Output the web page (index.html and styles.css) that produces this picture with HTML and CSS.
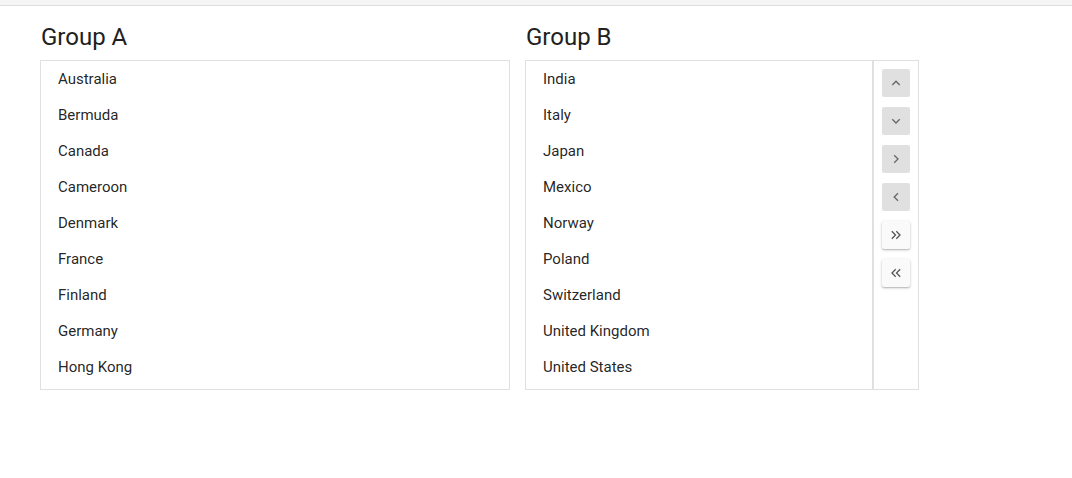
FILE: index.html
```html
<!DOCTYPE html>
<html>
<head>
<meta charset="UTF-8">
<title>Dual List Box</title>
<link rel="stylesheet" href="styles.css">
</head>
<body>

<div class="topbar"></div>

<div class="container">
  <div class="group group-a">
    <h4 class="group-title">Group A</h4>
    <ul class="listbox">
      <li>Australia</li>
      <li>Bermuda</li>
      <li>Canada</li>
      <li>Cameroon</li>
      <li>Denmark</li>
      <li>France</li>
      <li>Finland</li>
      <li>Germany</li>
      <li>Hong Kong</li>
    </ul>
  </div>

  <div class="group group-b">
    <h4 class="group-title">Group B</h4>
    <div class="listbox-wrap">
      <ul class="listbox">
        <li>India</li>
        <li>Italy</li>
        <li>Japan</li>
        <li>Mexico</li>
        <li>Norway</li>
        <li>Poland</li>
        <li>Switzerland</li>
        <li>United Kingdom</li>
        <li>United States</li>
      </ul>
      <div class="toolbar">
        <button class="tool disabled" title="Move Up">
          <svg width="10" height="10" viewBox="0 0 10 10"><path d="M1.3 7 L5 3.2 L8.7 7"/></svg>
        </button>
        <button class="tool disabled" title="Move Down">
          <svg width="10" height="10" viewBox="0 0 10 10"><path d="M1.3 3.2 L5 7 L8.7 3.2"/></svg>
        </button>
        <button class="tool disabled" title="Move To">
          <svg width="10" height="10" viewBox="0 0 10 10"><path d="M3.2 1.3 L7 5 L3.2 8.7"/></svg>
        </button>
        <button class="tool disabled" title="Move From">
          <svg width="10" height="10" viewBox="0 0 10 10"><path d="M7 1.3 L3.2 5 L7 8.7"/></svg>
        </button>
        <button class="tool" title="Move All To">
          <svg width="12" height="10" viewBox="0 0 12 10"><path d="M1.8 1.3 L5.5 5 L1.8 8.7 M6.3 1.3 L10 5 L6.3 8.7"/></svg>
        </button>
        <button class="tool" title="Move All From">
          <svg width="12" height="10" viewBox="0 0 12 10"><path d="M5.7 1.3 L2 5 L5.7 8.7 M10.2 1.3 L6.5 5 L10.2 8.7"/></svg>
        </button>
      </div>
    </div>
  </div>
</div>

</body>
</html>
```

FILE: styles.css
```css
/* Page */
body {
  margin: 0;
  background-color: #ffffff;
  color: rgba(0, 0, 0, 0.87);
  font-family: Roboto, "Liberation Sans", sans-serif;
}

.topbar {
  height: 5px;
  background-color: #f5f5f5;
  border-bottom: 1px solid #dddddd;
}

/* Layout of the two groups */
.container {
  display: flex;
  flex-direction: row;
  align-items: flex-start;
  gap: 15px;
  padding: 17px 40px 0 40px;
}

.group-a {
  width: 470px;
}

.group-b {
  width: 394px;
}

.group-title {
  margin: 0 0 8px 1px;
  font-size: 24px;
  line-height: 29px;
  font-weight: 400;
  color: #212121;
}

/* The list boxes */
.listbox {
  list-style-type: none;
  margin: 0;
  padding: 0;
  height: 330px;
  box-sizing: border-box;
  border: 1px solid #e0e0e0;
  background-color: #ffffff;
}

.listbox li {
  height: 36px;
  line-height: 36px;
  padding: 0 16px 0 17px;
  font-size: 15px;
  cursor: pointer;
}

.listbox-wrap {
  display: flex;
  flex-direction: row;
}

.listbox-wrap .listbox {
  width: 348px;
}

/* Toolbar with the move buttons */
.toolbar {
  width: 46px;
  height: 330px;
  box-sizing: border-box;
  border: 1px solid #e0e0e0;
  padding: 8px;
  display: flex;
  flex-direction: column;
  gap: 10px;
}

.tool {
  width: 28px;
  height: 28px;
  padding: 0;
  border: none;
  border-radius: 2px;
  background-color: #fafafa;
  box-shadow: 0 1px 3px rgba(0, 0, 0, 0.22), 0 1px 1px rgba(0, 0, 0, 0.12);
  display: flex;
  align-items: center;
  justify-content: center;
  cursor: pointer;
}

.tool svg path {
  fill: none;
  stroke: #555555;
  stroke-width: 1.3;
}

.tool.disabled {
  background-color: #e0e0e0;
  box-shadow: none;
  cursor: default;
}

.tool.disabled svg path {
  stroke: #666666;
}
```
